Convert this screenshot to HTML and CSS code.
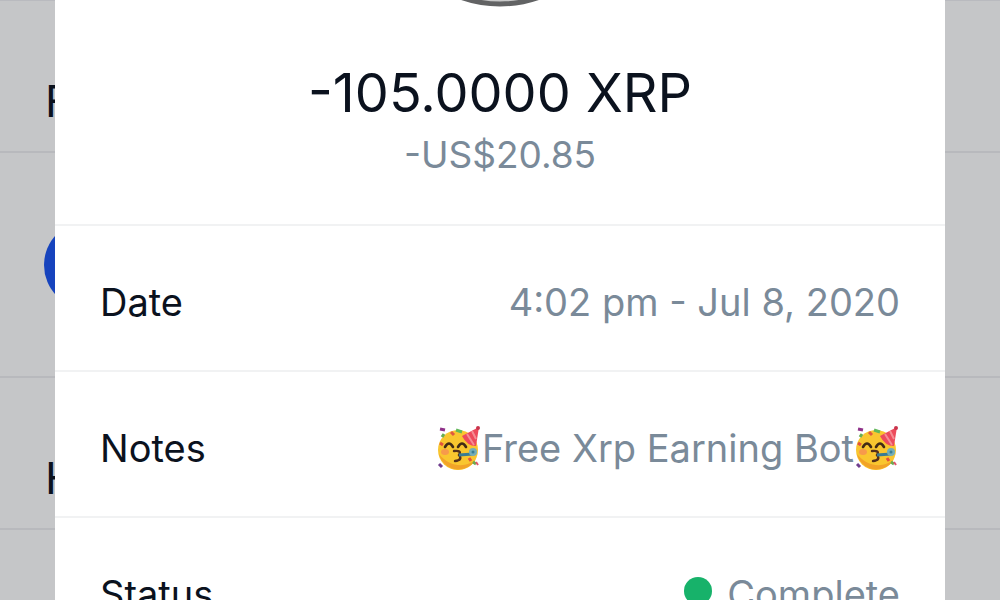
FILE: index.html
```html
<!DOCTYPE html>
<html lang="en">
<head>
<meta charset="utf-8">
<meta name="viewport" content="width=device-width, initial-scale=1">
<title>Transaction details</title>
<link rel="stylesheet" href="styles.css">
</head>
<body>
<svg class="symbols" aria-hidden="true">
  <symbol id="party" viewBox="0 0 46 46">
    <circle cx="22" cy="25" r="20" fill="#f9c62f"/>
    <path d="M3 29a20 20 0 0 0 37 5c-9 9-26 9-37-5z" fill="#f2a328"/>
    <ellipse cx="9" cy="27" rx="4" ry="3" fill="#f79a4b"/>
    <path d="M9 22q4-7 8 0M22 22q4-7 8 0" fill="none" stroke="#422b16" stroke-width="2.6" stroke-linecap="round"/>
    <path d="M18 26q8-1 5 4q4 5-4 6" fill="none" stroke="#54301a" stroke-width="2.4" stroke-linecap="round"/>
    <path d="M23 30l14-1" stroke="#397c93" stroke-width="3"/>
    <circle cx="37" cy="27" r="4" fill="#73aeb8"/>
    <circle cx="37" cy="27" r="1.5" fill="#3b7e92"/>
    <path d="M26 11L43 2 40 21Q31 21 26 11z" fill="#ed4b5c"/>
    <path d="M31 9l7 11M36 6l4 8" stroke="#f58c93" stroke-width="2"/>
    <circle cx="42" cy="3" r="2" fill="#c9344c"/>
    <path d="M4 4l5 1" stroke="#8e3189" stroke-width="3"/>
    <path d="M15 7l3 3" stroke="#df5941" stroke-width="3"/>
    <path d="M20 5l6 2" stroke="#62b85b" stroke-width="3"/>
    <path d="M6 12l2-3M37 37l3 2" stroke="#69ad52" stroke-width="3"/>
    <path d="M4 18l3 2M33 33l2 3" stroke="#e2533c" stroke-width="3"/>
    <path d="M3 39l3 3" stroke="#703f8f" stroke-width="3"/>
    <path d="M40 37l2 3" stroke="#e1546c" stroke-width="2"/>
  </symbol>
</svg>
<div class="screen">
  <div class="backdrop" aria-hidden="true">
    <div class="band band-heading">F</div>
    <div class="band band-asset"><span class="asset"></span></div>
    <div class="band band-heading">H</div>
  </div>
  <main class="sheet">
    <header class="summary">
      <svg class="coin" viewBox="0 0 240 240" aria-hidden="true"><circle cx="120" cy="120" r="117" fill="#c9c9c9" stroke="#626364" stroke-width="5"/></svg>
      <h1 class="amount">-105.0000 XRP</h1>
      <p class="fiat">-US$20.85</p>
    </header>
    <dl class="details">
      <div class="row"><dt>Date</dt><dd>4:02 pm - Jul 8, 2020</dd></div>
      <div class="row"><dt>Notes</dt><dd><svg class="emoji" role="img" aria-label="Partying face"><use href="#party"/></svg>Free Xrp Earning Bot<svg class="emoji" role="img" aria-label="Partying face"><use href="#party"/></svg></dd></div>
      <div class="row"><dt>Status</dt><dd><span class="dot"></span>Complete</dd></div>
    </dl>
  </main>
</div>
</body>
</html>
```
FILE: styles.css
```css
* { box-sizing: border-box; }
body {
  margin: 0;
  background: #c5c6c8;
  color: #0b121e;
  font-family: Inter, "Liberation Sans", sans-serif;
}
.symbols { position: absolute; width: 0; height: 0; }
.screen {
  display: grid;
  height: 100vh;
  overflow: hidden;
}
.backdrop, .sheet { grid-area: 1 / 1; }
.backdrop { border-top: 1px solid #b9babf; }
.band {
  display: flex;
  align-items: center;
  padding-left: 44px;
  border-bottom: 2px solid #b8b9bd;
}
.band-heading {
  height: 152px;
  padding-top: 50px;
  padding-left: 45px;
  font-size: 44px;
  line-height: 52px;
}
.band-asset { height: 225px; }
.asset {
  width: 88px;
  height: 88px;
  border-radius: 50%;
  background: #1643bd;
}
.sheet {
  position: relative;
  margin: 0 55px;
  background: #fff;
}
.summary {
  position: relative;
  height: 226px;
  padding-top: 60px;
  border-bottom: 2px solid #f1f2f3;
  text-align: center;
}
.coin {
  position: absolute;
  bottom: 217px;
  left: calc(50% - 120px);
  width: 240px;
  height: 240px;
}
.amount {
  margin: 0;
  font-size: 54px;
  font-weight: 400;
  line-height: 66px;
}
.fiat {
  margin: 4px 0 0;
  color: #7a8a99;
  font-size: 37px;
  line-height: 50px;
}
.details { margin: 0; font-size: 38px; }
.row {
  display: flex;
  align-items: center;
  justify-content: space-between;
  height: 146px;
  padding: 8px 45px 0;
  border-bottom: 2px solid #f1f2f3;
}
.row dd {
  display: flex;
  align-items: center;
  margin: 0;
  color: #7a8a99;
}
.emoji { width: 46px; height: 46px; }
.dot {
  width: 28px;
  height: 28px;
  margin: 0 15px 6px 0;
  border-radius: 50%;
  background: #17b26a;
}
```
